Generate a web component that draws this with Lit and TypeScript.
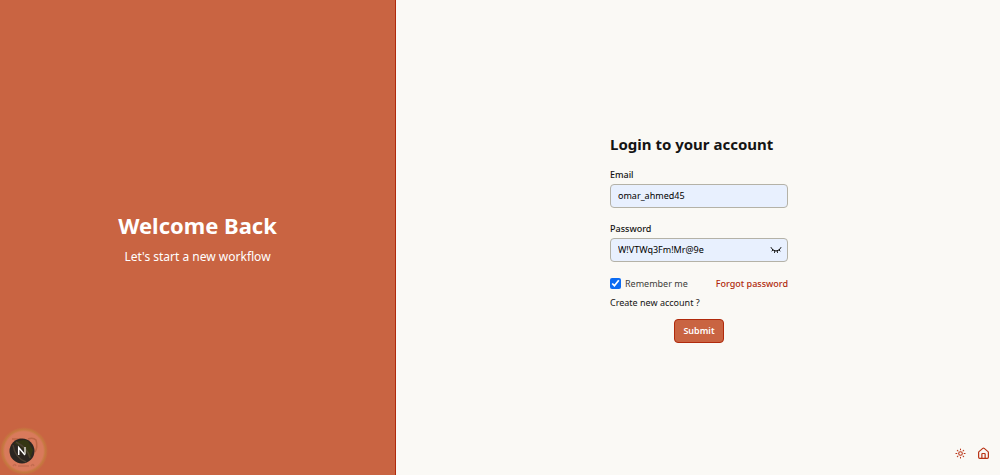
import { LitElement, html, css } from "lit";
import { customElement, state } from "lit/decorators.js";

@customElement("app-root")
export class AppRoot extends LitElement {
  @state() private visible = true;

  static styles = css`
    :host {
      display: block;
      font-family: "Noto Sans", "Open Sans", sans-serif;
      font-size: 9px;
      line-height: 14px;
      color: #141413;
    }
    * {
      box-sizing: border-box;
    }
    h1, h2, p {
      margin: 0;
    }
    .page {
      position: relative;
      display: grid;
      grid-template-columns: 396fr 604fr;
      min-height: 100vh;
      background: #faf9f5;
    }
    .hero {
      display: flex;
      flex-direction: column;
      align-items: center;
      justify-content: center;
      gap: 6px;
      background: #c96442;
      border-right: 1px solid #b02a0c;
      color: #fff;
      text-align: center;
    }
    .hero h1 {
      font-size: 22px;
      line-height: 32px;
      font-weight: 700;
    }
    .hero p {
      font-size: 12px;
      line-height: 20px;
    }
    .side {
      display: flex;
      align-items: center;
      justify-content: center;
      padding-left: 2px;
    }
    form {
      display: flex;
      flex-direction: column;
      width: 178px;
    }
    h2 {
      font-size: 15px;
      line-height: 22px;
      font-weight: 700;
      margin-bottom: 13px;
      white-space: nowrap;
    }
    .field {
      display: flex;
      flex-direction: column;
      gap: 2px;
      margin-bottom: 14px;
    }
    .field label {
      font-weight: 500;
    }
    .box {
      display: flex;
      align-items: center;
      height: 24px;
      padding: 0 5px 0 7px;
      border: 1px solid #b4b2a7;
      border-radius: 4px;
      background: #e8f0fe;
    }
    .box input {
      flex: 1;
      min-width: 0;
      padding: 0;
      border: 0;
      outline: 0;
      background: transparent;
      color: #000;
      font: inherit;
    }
    button {
      font: inherit;
      cursor: pointer;
    }
    .icon {
      display: flex;
      padding: 0;
      border: 0;
      background: none;
      color: inherit;
    }
    .row {
      display: flex;
      align-items: center;
      justify-content: space-between;
      margin: 1px 0 5px;
    }
    .remember {
      display: flex;
      align-items: center;
      gap: 4px;
      color: #3d3d3a;
    }
    .remember input {
      width: 11px;
      height: 11px;
      margin: 0;
      accent-color: #0b6bf2;
    }
    a {
      color: inherit;
      text-decoration: none;
    }
    .forgot {
      color: #b02a0c;
      font-weight: 500;
    }
    .create {
      align-self: flex-start;
    }
    .submit {
      align-self: center;
      height: 24px;
      margin-top: 9px;
      padding: 0 8px;
      border: 1px solid #b02a0c;
      border-radius: 4px;
      background: #c96442;
      color: #fff;
      font-weight: 600;
    }
    .tools {
      position: absolute;
      right: 10px;
      bottom: 15px;
      display: flex;
      align-items: center;
      gap: 11px;
      color: #b83214;
    }
    .badge {
      position: absolute;
      left: 0;
      bottom: 0;
      padding: 0;
      border: 0;
      background: none;
      display: flex;
    }
  `;

  render() {
    return html`
      <main class="page">
        <section class="hero">
          <h1>Welcome Back</h1>
          <p>Let's start a new workflow</p>
        </section>
        <section class="side">
          <form @submit=${(e: Event) => e.preventDefault()}>
            <h2>Login to your account</h2>
            <div class="field">
              <label for="email">Email</label>
              <div class="box"><input id="email" type="text" value="omar_ahmed45" /></div>
            </div>
            <div class="field">
              <label for="password">Password</label>
              <div class="box">
                <input id="password" type=${this.visible ? "text" : "password"} value="W!VTWq3Fm!Mr@9e" />
                <button class="icon" type="button" aria-label="Toggle password visibility"
                  @click=${() => (this.visible = !this.visible)}>
                  <svg width="12" height="12" viewBox="0 0 24 24" fill="none" stroke="#141413"
                    stroke-width="2" stroke-linecap="round" stroke-linejoin="round">
                    <path d="M2 7a10.65 10.65 0 0 0 20 0" />
                    <path d="m15 17-.72-3.25M9 17l.72-3.25M4 14l1.73-2.05M20 14l-1.73-2.05" />
                  </svg>
                </button>
              </div>
            </div>
            <div class="row">
              <label class="remember"><input type="checkbox" checked />Remember me</label>
              <a class="forgot" href="#forgot">Forgot password</a>
            </div>
            <a class="create" href="#register">Create new account ?</a>
            <button class="submit" type="submit">Submit</button>
          </form>
        </section>
        <nav class="tools">
          <button class="icon" type="button" aria-label="Toggle theme">
            <svg width="11" height="11" viewBox="0 0 24 24" fill="none" stroke="currentColor"
              stroke-width="2.2" stroke-linecap="round" stroke-linejoin="round">
              <circle cx="12" cy="12" r="4" />
              <path d="M12 2v2M12 20v2M4.93 4.93l1.41 1.41M17.66 17.66l1.41 1.41M2 12h2M20 12h2M6.34 17.66l-1.41 1.41M19.07 4.93l-1.41 1.41" />
            </svg>
          </button>
          <a class="icon" href="#home" aria-label="Home">
            <svg width="13" height="13" viewBox="0 0 24 24" fill="none" stroke="currentColor"
              stroke-width="2.2" stroke-linecap="round" stroke-linejoin="round">
              <path d="M15 21v-8a1 1 0 0 0-1-1h-4a1 1 0 0 0-1 1v8" />
              <path d="M3 10a2 2 0 0 1 .7-1.5l7-6a2 2 0 0 1 2.6 0l7 6A2 2 0 0 1 21 10v9a2 2 0 0 1-2 2H5a2 2 0 0 1-2-2z" />
            </svg>
          </a>
        </nav>
        <button class="badge" type="button" aria-label="Open developer tools">
          <svg width="50" height="50" viewBox="0 0 50 50" fill="none">
            <defs>
              <radialGradient id="halo">
                <stop offset="0.8" stop-color="#d97a5c" />
                <stop offset="0.89" stop-color="#c5793f" />
                <stop offset="1" stop-color="#c96442" />
              </radialGradient>
            </defs>
            <circle cx="24" cy="26" r="24" fill="url(#halo)" />
            <path d="M12 14h9M28 14q5-2 8 1q2 7-1 12" stroke="#bd6545" stroke-width="1.5" />
            <path d="M13 41q2-3 3 0M18 41h11M31 41q2-3 3 0" stroke="#c46c50" stroke-width="1.5" />
            <circle cx="22" cy="26" r="12.5" fill="#2b2521" />
            <path d="M14 18q8-5 14-2l5 9-3 9q-6-12-15-15z" fill="#343613" />
            <path d="M13 20q2 13 13 17M16 17q12 6 14 16" stroke="#4b4032" stroke-width="1.5" />
            <path d="M18.7 30v-7.5l6.3 7.5" stroke="#fff" stroke-width="1.5" />
            <path d="M25 22v7" stroke="#e5e2dc" stroke-width="1.4" />
          </svg>
        </button>
      </main>
    `;
  }
}
